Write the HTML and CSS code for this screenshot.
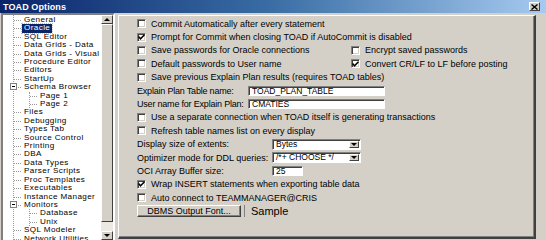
FILE: index.html
```html
<!DOCTYPE html>
<html>
<head>
    <title>TOAD Options</title>
    <link rel="stylesheet" href="styles.css">
</head>
<body>
    <div class="window">
        <div class="titlebar">
            <span class="title">TOAD Options</span>
            <span class="close-btn">
                <svg width="7" height="6" viewBox="0 0 7 6"><path d="M0.5 0.5 L6.5 5.5 M6.5 0.5 L0.5 5.5" stroke="#000" stroke-width="1.4"/></svg>
            </span>
        </div>

        <div class="main">
            <!-- Options tree -->
            <div class="tree">
                <ul class="tree-list">
                    <li><span class="node">General</span></li>
                    <li><span class="node selected">Oracle</span></li>
                    <li><span class="node">SQL Editor</span></li>
                    <li><span class="node">Data Grids - Data</span></li>
                    <li><span class="node">Data Grids - Visual</span></li>
                    <li><span class="node">Procedure Editor</span></li>
                    <li><span class="node">Editors</span></li>
                    <li><span class="node">StartUp</span></li>
                    <li class="open"><span class="toggle"></span><span class="node">Schema Browser</span>
                        <ul class="tree-list sub">
                            <li><span class="node">Page 1</span></li>
                            <li class="last"><span class="node">Page 2</span></li>
                        </ul>
                    </li>
                    <li><span class="node">Files</span></li>
                    <li><span class="node">Debugging</span></li>
                    <li><span class="node">Types Tab</span></li>
                    <li><span class="node">Source Control</span></li>
                    <li><span class="node">Printing</span></li>
                    <li><span class="node">DBA</span></li>
                    <li><span class="node">Data Types</span></li>
                    <li><span class="node">Parser Scripts</span></li>
                    <li><span class="node">Proc Templates</span></li>
                    <li><span class="node">Executables</span></li>
                    <li><span class="node">Instance Manager</span></li>
                    <li class="open"><span class="toggle"></span><span class="node">Monitors</span>
                        <ul class="tree-list sub">
                            <li><span class="node">Database</span></li>
                            <li class="last"><span class="node">Unix</span></li>
                        </ul>
                    </li>
                    <li><span class="node">SQL Modeler</span></li>
                    <li><span class="node">Network Utilities</span></li>
                </ul>
                <div class="scrollbar">
                    <div class="sb-btn"><span class="arrow-up"></span></div>
                    <div class="sb-thumb"></div>
                    <div class="sb-track"></div>
                    <div class="sb-btn"><span class="arrow-down"></span></div>
                </div>
            </div>

            <!-- Oracle page -->
            <div class="panel">
                <div class="row">
                    <span class="check"></span>
                    <span>Commit Automatically after every statement</span>
                </div>
                <div class="row">
                    <span class="check checked"><svg width="7" height="6" viewBox="0 0 7 6"><path d="M0.5 2.5 L2.5 4.8 L6.5 0.8" fill="none" stroke="#000" stroke-width="1.5"/></svg></span>
                    <span>Prompt for Commit when closing TOAD if AutoCommit is disabled</span>
                </div>
                <div class="pair">
                    <div class="row col-left">
                        <span class="check"></span>
                        <span>Save passwords for Oracle connections</span>
                    </div>
                    <div class="row">
                        <span class="check"></span>
                        <span>Encrypt saved passwords</span>
                    </div>
                </div>
                <div class="pair">
                    <div class="row col-left">
                        <span class="check"></span>
                        <span>Default passwords to User name</span>
                    </div>
                    <div class="row">
                        <span class="check checked"><svg width="7" height="6" viewBox="0 0 7 6"><path d="M0.5 2.5 L2.5 4.8 L6.5 0.8" fill="none" stroke="#000" stroke-width="1.5"/></svg></span>
                        <span>Convert CR/LF to LF before posting</span>
                    </div>
                </div>
                <div class="row">
                    <span class="check"></span>
                    <span>Save previous Explain Plan results (requires TOAD tables)</span>
                </div>

                <div class="row field-row">
                    <label class="field-label">Explain Plan Table name:</label>
                    <span class="edit wide">TOAD_PLAN_TABLE</span>
                </div>
                <div class="row field-row">
                    <label class="field-label">User name for Explain Plan:</label>
                    <span class="edit wide">CMATIES</span>
                </div>

                <div class="row">
                    <span class="check"></span>
                    <span>Use a separate connection when TOAD itself is generating transactions</span>
                </div>
                <div class="row">
                    <span class="check"></span>
                    <span>Refresh table names list on every display</span>
                </div>

                <div class="row field-row">
                    <label class="combo-label">Display size of extents:</label>
                    <span class="combo">
                        <span class="combo-value">Bytes</span>
                        <span class="combo-btn"><span class="arrow-down"></span></span>
                    </span>
                </div>
                <div class="row field-row">
                    <label class="combo-label">Optimizer mode for DDL queries:</label>
                    <span class="combo">
                        <span class="combo-value">/*+ CHOOSE */</span>
                        <span class="combo-btn"><span class="arrow-down"></span></span>
                    </span>
                </div>
                <div class="row field-row">
                    <label class="combo-label">OCI Array Buffer size:</label>
                    <span class="edit short">25</span>
                </div>

                <div class="row">
                    <span class="check checked"><svg width="7" height="6" viewBox="0 0 7 6"><path d="M0.5 2.5 L2.5 4.8 L6.5 0.8" fill="none" stroke="#000" stroke-width="1.5"/></svg></span>
                    <span>Wrap INSERT statements when exporting table data</span>
                </div>
                <div class="row">
                    <span class="check"></span>
                    <span>Auto connect to TEAMMANAGER@CRIS</span>
                </div>

                <div class="row font-row">
                    <button class="btn">DBMS Output Font...</button>
                    <span class="sample">Sample</span>
                </div>
            </div>
        </div>
    </div>
</body>
</html>
```

FILE: styles.css
```css
:root {
    --face: #d4d0c8;
    --shadow: #808080;
    --dark: #404040;
    --light: #ffffff;
    --select: #0a246a;
}

body {
    margin: 0;
    background: var(--face);
    font-family: 'Liberation Sans', Arial, sans-serif;
    font-size: 9px;
    color: #000;
}

.window {
    width: 546px;
    height: 240px;
    overflow: hidden;
    background: var(--face);
}

/* Title bar */
.titlebar {
    height: 13px;
    display: flex;
    align-items: center;
    justify-content: space-between;
    padding: 0 6px 0 3px;
    background: linear-gradient(to right, #0a246a, #3a6ea5 50%, #a6caf0);
}

.title {
    color: #fff;
    font-weight: bold;
    font-size: 9px;
    letter-spacing: 0.1px;
}

.close-btn {
    width: 11px;
    height: 9px;
    box-sizing: border-box;
    background: var(--face);
    border-top: 1px solid var(--light);
    border-left: 1px solid var(--light);
    border-right: 1px solid var(--dark);
    border-bottom: 1px solid var(--dark);
    display: flex;
    align-items: center;
    justify-content: center;
}

.close-btn svg {
    display: block;
}

.main {
    display: flex;
    padding-left: 1px;
}

/* Tree */
.tree {
    width: 114px;
    height: 227px;
    box-sizing: border-box;
    background: #fff;
    border-top: 2px solid var(--shadow);
    border-left: 2px solid var(--shadow);
    border-right: 2px solid var(--light);
    display: flex;
    flex-shrink: 0;
    overflow: hidden;
}

.tree > .tree-list {
    flex: 1;
    margin-left: 10px;
    padding-top: 1px;
}

.tree-list {
    list-style: none;
    margin: 0;
    padding: 0;
    border-left: 1px dotted #9a9a9a;
}

.tree-list li {
    position: relative;
    padding-left: 10px;
    height: auto;
    line-height: 8.4px;
    font-size: 8.1px;
    letter-spacing: 0.4px;
    white-space: nowrap;
}

.tree-list li::before {
    content: '';
    position: absolute;
    left: 0;
    top: 4px;
    width: 7px;
    border-top: 1px dotted #9a9a9a;
}

.tree-list.sub {
    margin-left: 5px;
    height: 16.8px;
}

.node {
    display: inline-block;
    height: 8.4px;
    padding: 0 2px;
    margin-left: -2px;
}

.node.selected {
    background: var(--select);
    color: #fff;
    outline: 1px dotted #c0c0c0;
}

.toggle {
    position: absolute;
    left: -4px;
    top: 0;
    width: 7px;
    height: 7px;
    box-sizing: border-box;
    border: 1px solid #808080;
    background: #fff;
    z-index: 1;
}

.toggle::after {
    content: '';
    position: absolute;
    left: 1px;
    top: 2px;
    width: 3px;
    border-top: 1px solid #000;
}

.scrollbar {
    width: 12px;
    display: flex;
    flex-direction: column;
    background: #ece9e2;
}

.sb-btn,
.sb-thumb {
    box-sizing: border-box;
    background: var(--face);
    border-top: 1px solid var(--light);
    border-left: 1px solid var(--light);
    border-right: 1px solid var(--dark);
    border-bottom: 1px solid var(--dark);
}

.sb-btn {
    height: 9px;
    display: flex;
    align-items: center;
    justify-content: center;
}

.sb-thumb {
    height: 198px;
}

.sb-track {
    flex: 1;
}

.arrow-up {
    width: 0;
    height: 0;
    border-left: 3px solid transparent;
    border-right: 3px solid transparent;
    border-bottom: 3px solid #000;
}

.arrow-down {
    width: 0;
    height: 0;
    border-left: 3px solid transparent;
    border-right: 3px solid transparent;
    border-top: 3px solid #000;
}

/* Options page */
.panel {
    width: 418px;
    height: 224px;
    box-sizing: border-box;
    margin: 2px 0 0 3px;
    padding: 1px 0 0 18px;
    border-top: 1px solid var(--light);
    border-left: 1px solid var(--light);
    border-right: 2px solid var(--dark);
    border-bottom: 2px solid var(--dark);
    box-shadow: inset -1px -1px 0 var(--shadow);
}

.row {
    height: 13.4px;
    display: flex;
    align-items: center;
    gap: 5px;
    white-space: nowrap;
}

.pair {
    display: flex;
}

.col-left {
    width: 214px;
}

.check {
    width: 9px;
    height: 9px;
    box-sizing: border-box;
    flex-shrink: 0;
    background: #fff;
    border-top: 1px solid var(--shadow);
    border-left: 1px solid var(--shadow);
    border-right: 1px solid var(--light);
    border-bottom: 1px solid var(--light);
    box-shadow: inset 1px 1px 0 var(--dark), inset -1px -1px 0 var(--face);
    display: flex;
    align-items: center;
    justify-content: center;
}

.check svg {
    display: block;
}

.field-row {
    gap: 0;
}

.field-label {
    width: 111px;
    letter-spacing: -0.2px;
}

.combo-label {
    width: 135px;
}

.edit,
.combo {
    box-sizing: border-box;
    background: #fff;
    border-top: 1px solid var(--shadow);
    border-left: 1px solid var(--shadow);
    border-right: 1px solid var(--light);
    border-bottom: 1px solid var(--light);
    box-shadow: inset 1px 1px 0 var(--dark);
}

.edit {
    height: 10px;
    line-height: 8px;
    padding-left: 3px;
    font-size: 8.5px;
}

.edit.wide {
    width: 137px;
}

.edit.short {
    width: 31px;
}

.combo {
    width: 89px;
    height: 11px;
    display: flex;
}

.combo-value {
    flex: 1;
    padding-left: 3px;
    line-height: 9px;
    font-size: 8.5px;
}

.combo-btn {
    width: 10px;
    box-sizing: border-box;
    margin: 1px 1px 1px 0;
    background: var(--face);
    border-top: 1px solid var(--light);
    border-left: 1px solid var(--light);
    border-right: 1px solid var(--dark);
    border-bottom: 1px solid var(--dark);
    display: flex;
    align-items: center;
    justify-content: center;
}

.font-row {
    gap: 0;
}

.btn {
    width: 104px;
    height: 12px;
    margin: 0;
    padding: 0;
    font-family: inherit;
    font-size: 9px;
    line-height: 9px;
    color: #000;
    background: var(--face);
    border-top: 1px solid var(--light);
    border-left: 1px solid var(--light);
    border-right: 1px solid var(--dark);
    border-bottom: 1px solid var(--dark);
    box-shadow: inset -1px -1px 0 var(--shadow);
}

.sample {
    margin-left: 3px;
    padding-left: 6px;
    height: 12px;
    line-height: 12px;
    border-left: 1px solid var(--shadow);
    font-size: 11px;
}
```
